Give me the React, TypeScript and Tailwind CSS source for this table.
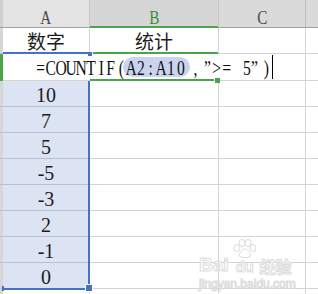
import React from "react";

const SERIF = "font-['Liberation_Serif','Times_New_Roman',serif]";
const CJK = "font-['Noto_Sans_CJK_SC','Noto_Sans',sans-serif]";

type Ch = { c: string; cls?: string };

const head: Ch[] = [
  { c: "=" },
  { c: "C" },
  { c: "O" },
  { c: "U" },
  { c: "N" },
  { c: "T" },
  { c: "I" },
  { c: "F" },
  { c: "(" },
];
const ref: Ch[] = [{ c: "A" }, { c: "2" }, { c: ":" }, { c: "A" }, { c: "1" }, { c: "0" }];
const tail: Ch[] = [
  { c: "," },
  { c: "\u201d", cls: "ml-[2px]" },
  { c: ">" },
  { c: "=" },
  { c: " " },
  { c: "5" },
  { c: "\u201d", cls: "ml-[-3px]" },
  { c: ")", cls: "ml-[2px]" },
];

function Glyph({ c, cls = "", lead }: { c: string; cls?: string; lead: string }) {
  return (
    <span className={`flex w-[10px] shrink-0 justify-center whitespace-pre ${lead} ${cls}`}>
      <span className="inline-block scale-x-[0.78]">{c}</span>
    </span>
  );
}

function DataRow({ v }: { v: string }) {
  return (
    <div className="flex h-[26px]">
      <div className="w-[3px] shrink-0 bg-[#d6d6d6] border-b border-[#c2c2c2]" />
      <div
        className={`w-[87px] shrink-0 bg-[#dce3f3] border-b border-r border-[#b7bfd0] flex justify-center text-[20px] leading-[28px] text-[#1c1c1c] ${SERIF}`}
      >
        {v}
      </div>
      <div className="w-[129px] shrink-0 border-b border-r border-[#d4d4d4]" />
      <div className="w-[87px] shrink-0 border-b border-r border-[#d4d4d4]" />
      <div className="flex-1 border-b border-[#d4d4d4]" />
    </div>
  );
}

function Paw() {
  return (
    <svg width="26" height="20" viewBox="0 0 26 20" className="block">
      <g fill="#ffffff" stroke="#dcdcdc" strokeWidth="1">
        <ellipse cx="5" cy="9" rx="3" ry="3.6" />
        <ellipse cx="10" cy="4" rx="3" ry="3.6" />
        <ellipse cx="16" cy="4" rx="3" ry="3.6" />
        <ellipse cx="21" cy="9" rx="3" ry="3.6" />
        <path d="M7 17 C8 12 11 10 13 10 C15 10 18 12 19 17 C17 19 9 19 7 17 Z" />
      </g>
    </svg>
  );
}

export default function App() {
  const values = ["10", "7", "5", "-5", "-3", "2", "-1", "0"];
  return (
    <div className="relative w-[318px] h-[294px] overflow-hidden bg-white">
      {/* header row */}
      <div className={`flex h-[28px] text-[19px] leading-[35px] ${SERIF}`}>
        <div className="w-[3px] shrink-0 bg-[#d0d0d0] border-b border-[#a0a0a0]" />
        <div className="w-[87px] shrink-0 bg-[#e4e4e4] border-b border-r border-b-[#a0a0a0] border-r-[#c6c6c6] flex justify-center text-[#4a4a4a]">
          <span className="inline-block scale-x-[0.8]">A</span>
        </div>
        <div className="w-[129px] shrink-0 bg-[#d6d6d6] border-b border-r border-b-[#a0a0a0] border-r-[#c6c6c6] flex justify-center text-[#3b8f3b]">
          <span className="inline-block scale-x-[0.8]">B</span>
        </div>
        <div className="w-[87px] shrink-0 bg-[#dadada] border-b border-r border-b-[#a0a0a0] border-r-[#bdbdbd] flex justify-center text-[#4a4a4a]">
          <span className="inline-block scale-x-[0.8]">C</span>
        </div>
        <div className="flex-1 bg-[#dadada] border-b border-[#a0a0a0]" />
      </div>

      {/* row 1 */}
      <div className={`flex h-[26px] text-[19px] leading-[26px] text-[#1c1c1c] ${CJK}`}>
        <div className="w-[3px] shrink-0 bg-[#d6d6d6] border-b border-[#c2c2c2]" />
        <div className="w-[87px] shrink-0 border-b border-r border-[#d4d4d4] flex justify-center">数字</div>
        <div className="w-[129px] shrink-0 border-b border-r border-[#d4d4d4] flex justify-center">统计</div>
        <div className="w-[87px] shrink-0 border-b border-r border-[#d4d4d4]" />
        <div className="flex-1 border-b border-[#d4d4d4]" />
      </div>

      {/* row 2: in-cell editor */}
      <div className="flex h-[27px]">
        <div className="w-[3px] shrink-0 bg-[#4ba34b]" />
        <div
          className={`w-[303px] shrink-0 bg-white border-b border-r border-[#d4d4d4] flex items-start pl-[33px] text-[20px] text-[#111111] ${SERIF}`}
        >
          {head.map((g, i) => (
            <Glyph key={"h" + i} c={g.c} cls={g.cls} lead="h-[26px] leading-[28px]" />
          ))}
          <span className="ml-[-3px] mt-[3px] flex h-[20px] shrink-0 items-start rounded-full bg-[#cad4ed] pl-[3px] pr-[4px]">
            {ref.map((g, i) => (
              <Glyph key={"r" + i} c={g.c} lead="h-[20px] leading-[22px]" />
            ))}
          </span>
          {tail.map((g, i) => (
            <Glyph key={"t" + i} c={g.c} cls={g.cls} lead="h-[26px] leading-[28px]" />
          ))}
          <span className="ml-[1px] mt-[1px] h-[24px] w-[1px] shrink-0 bg-black" />
        </div>
        <div className="flex-1 border-b border-[#d4d4d4]" />
      </div>

      {values.map((v, i) => (
        <DataRow key={i} v={v} />
      ))}

      {/* row 11 (partial) */}
      <div className="flex h-[5px]">
        <div className="w-[3px] shrink-0 bg-[#d6d6d6]" />
        <div className="w-[87px] shrink-0 border-r border-[#d4d4d4]" />
        <div className="w-[129px] shrink-0 border-r border-[#d4d4d4]" />
        <div className="w-[87px] shrink-0 border-r border-[#d4d4d4]" />
        <div className="flex-1" />
      </div>

      {/* selection / active-cell borders */}
      <div className="absolute left-[90px] top-[26px] h-[2px] w-[128px] bg-[#4ba34b]" />
      <div className="absolute left-[3px] top-[52px] h-[2px] w-[85px] bg-[#4472c4]" />
      <div className="absolute left-[88px] top-[52px] h-[4px] w-[4px] bg-[#4472c4]" />
      <div className="absolute left-[93px] top-[52px] h-[2px] w-[125px] bg-[#4ba34b]" />
      <div className="absolute left-[90px] top-[79px] h-[2px] w-[124px] bg-[#4ba34b]" />
      <div className="absolute left-[215px] top-[78px] h-[5px] w-[5px] bg-[#4ba34b]" />
      <div className="absolute left-[88px] top-[81px] h-[208px] w-[2px] bg-[#4472c4]" />
      <div className="absolute left-[4px] top-[288px] h-[2px] w-[83px] bg-[#4472c4]" />
      <div className="absolute left-[2px] top-[286px] h-[5px] w-[2px] bg-[#4472c4]" />
      <div className="absolute left-[85px] top-[284px] h-[8px] w-[8px] border border-white bg-[#4472c4]" />

      {/* watermark */}
      <div className="pointer-events-none absolute left-[199px] top-[239px] text-white [-webkit-text-stroke:1px_#dddddd]">
        <div className="flex items-end font-['Liberation_Sans',sans-serif] text-[19px] font-bold leading-none">
          <span>Bai</span>
          <span className="ml-[3px] flex flex-col items-center">
            <Paw />
            <span className="text-[15px] leading-none">du</span>
          </span>
          <span className={`ml-[2px] text-[16px] leading-none ${CJK}`}>经验</span>
        </div>
        <div className="mt-[4px] font-['Liberation_Sans',sans-serif] text-[12px] leading-none">jingyan.baidu.com</div>
      </div>
    </div>
  );
}
